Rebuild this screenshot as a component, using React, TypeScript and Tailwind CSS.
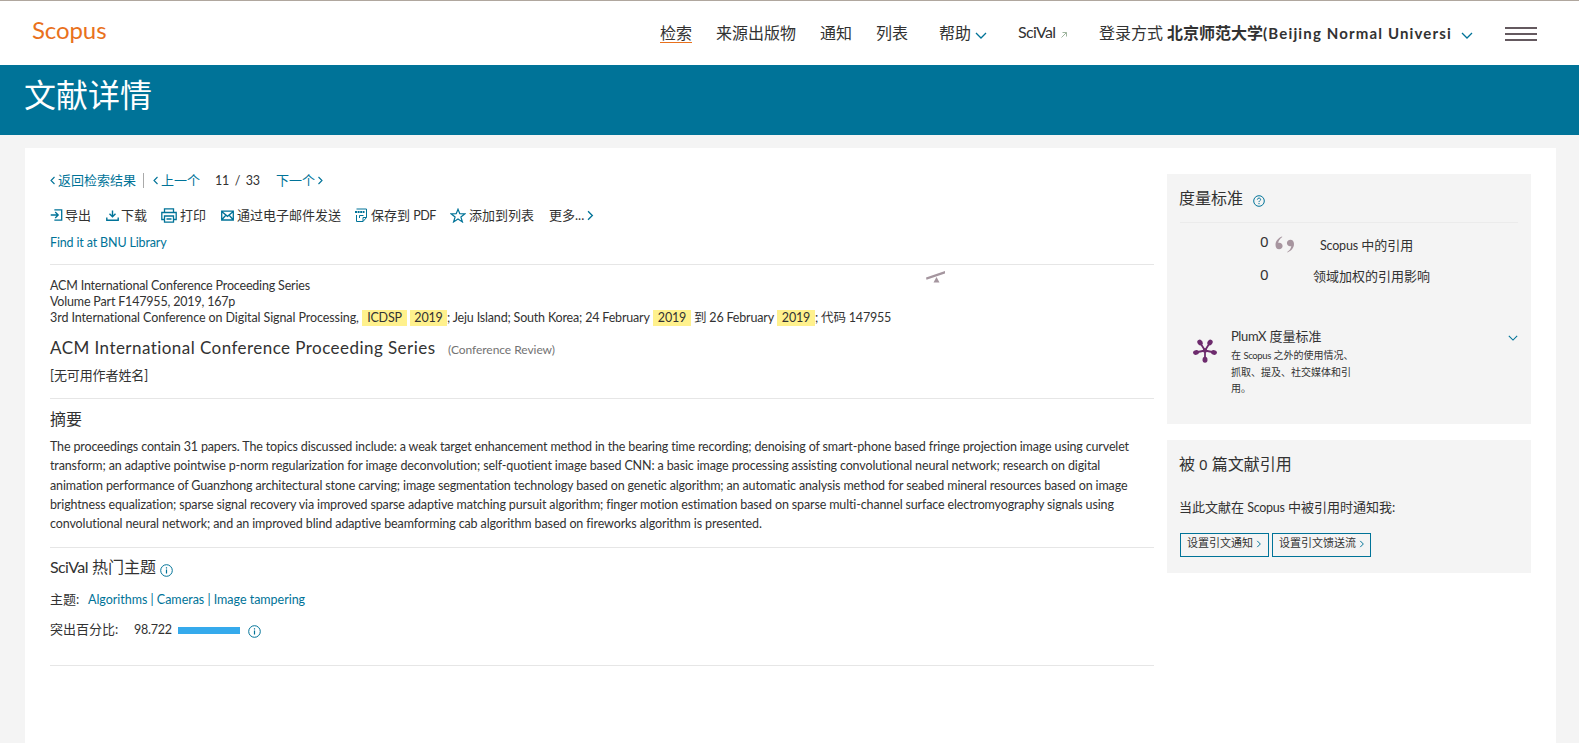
import type { ReactNode } from "react";

const navItems = ["来源出版物", "通知", "列表"];

const abstractLines = [
  { text: "The proceedings contain 31 papers. The topics discussed include: a weak target enhancement method in the bearing time recording; denoising of smart-phone based fringe projection image using curvelet", tracking: "tracking-[-0.15px]" },
  { text: "transform; an adaptive pointwise p-norm regularization for image deconvolution; self-quotient image based CNN: a basic image processing assisting convolutional neural network; research on digital", tracking: "tracking-[-0.127px]" },
  { text: "animation performance of Guanzhong architectural stone carving; image segmentation technology based on genetic algorithm; an automatic analysis method for seabed mineral resources based on image", tracking: "tracking-[-0.138px]" },
  { text: "brightness equalization; sparse signal recovery via improved sparse adaptive matching pursuit algorithm; finger motion estimation based on sparse multi-channel surface electromyography signals using", tracking: "tracking-[-0.135px]" },
  { text: "convolutional neural network; and an improved blind adaptive beamforming cab algorithm based on fireworks algorithm is presented.", tracking: "tracking-[-0.11px]" },
];

function Chevron({ className, d = "M1 1l5 5 5-5", box = "0 0 12 7", width = 1.3 }: { className: string; d?: string; box?: string; width?: number }) {
  return (
    <svg className={className} viewBox={box} fill="none" stroke="#007398" strokeWidth={width}>
      <path d={d} />
    </svg>
  );
}

function ChevronLeft({ className }: { className: string }) {
  return <Chevron className={className} d="M4.500 1L1 4.500L4.500 8" box="0 0 5 9" width={1.1} />;
}

function ChevronRight({ className }: { className: string }) {
  return <Chevron className={className} d="M.5 1L4 4.500L.5 8" box="0 0 5 9" width={1.1} />;
}

function InfoIcon({ className }: { className: string }) {
  return (
    <svg className={className} viewBox="0 0 13 13" fill="none" stroke="#007398">
      <circle cx="6.500" cy="6.500" r="5.800" />
      <path d="M6.500 5.500v4M6.500 3.200v1.300" strokeWidth="1.200" />
    </svg>
  );
}

function HelpIcon({ className }: { className: string }) {
  return (
    <svg className={className} viewBox="0 0 12 12" fill="none" stroke="#007398">
      <circle cx="6" cy="6" r="5.300" />
      <path d="M4.400 4.600c0-2 3.200-2 3.200-.1 0 1.200-1.600 1.200-1.600 2.600M6 8v1.200" />
    </svg>
  );
}

function ExportIcon() {
  return (
    <svg className="h-3 w-3.5 shrink-0" viewBox="0 0 14 12" fill="none" stroke="#007398" strokeWidth="1.300">
      <path d="M5 1.500V.8h6.700v10.400H5v-.8M.7 6h7.500M5.200 3L8.200 6l-3 3" />
    </svg>
  );
}

function DownloadIcon() {
  return (
    <svg className="h-3 w-[13px] shrink-0" viewBox="0 0 13 12" fill="none" stroke="#007398" strokeWidth="1.400">
      <path d="M6.500 1.500v6M3.500 4.800l3 3 3-3M.8 8.500v2.700h11.400V8.500" />
    </svg>
  );
}

function PrintIcon() {
  return (
    <svg className="h-[15px] w-4 shrink-0" viewBox="0 0 16 15" fill="none" stroke="#007398" strokeWidth="1.300">
      <path d="M3.500 4.500V.8h9v3.700M3.500 11.500H.8v-7h14.400v7h-2.700M3.500 8h9v6.200h-9zM5.500 11h5" />
    </svg>
  );
}

function MailIcon() {
  return (
    <svg className="h-[11px] w-[13px] shrink-0" viewBox="0 0 13 11" fill="none" stroke="#007398" strokeWidth="1.300">
      <path d="M.7 1.200h11.600v8.800H.7zM.7 1.500l5.800 4.800 5.800-4.800M.8 9.800L5 5M12.200 9.800L8 5" />
    </svg>
  );
}

function PdfIcon() {
  return (
    <svg className="h-3.5 w-3 shrink-0" viewBox="0 0 12 14" fill="none" stroke="#007398">
      <path d="M1.500 1h10v8.500L8 13.500H1.500V7M11.500 9.500H8v4" />
      <path d="M0 4h9.500" strokeWidth="2" strokeDasharray="2 .6" />
      <path d="M4.500 10V7.500h4" />
    </svg>
  );
}

function StarIcon() {
  return (
    <svg className="h-[15px] w-4 shrink-0" viewBox="0 0 16 15" fill="none" stroke="#007398" strokeWidth="1.200">
      <path d="M8 1.200l1.800 4.500 5.200.1-4.100 3.100 1.500 5L8 11l-4.400 2.900 1.500-5L1 5.800l5.200-.1z" />
    </svg>
  );
}

function QuoteIcon() {
  return (
    <svg className="h-[17px] w-5" viewBox="0 0 20 17" fill="#a7959f">
      <path d="M7 .6C3.500 2 .5 5 .5 9c0 2.800 1.500 4.300 3.600 4.300 2 0 3.500-1.400 3.500-3.300S6.200 6.800 4.400 6.800c-.6 0-1 .1-1.200.2C3.500 4.500 5 2.500 7.300 1z" />
      <path d="M12.500 16.400c3.500-1.400 6.500-4.400 6.500-8.400 0-2.800-1.500-4.300-3.600-4.300-2 0-3.500 1.400-3.500 3.300s1.400 3.200 3.200 3.200c.6 0 1-.1 1.200-.2-.3 2.500-1.800 4.500-4.100 6z" />
    </svg>
  );
}

function PlumIcon() {
  return (
    <svg className="h-6 w-6 shrink-0" viewBox="0 0 24 24" fill="#6d2b6d" stroke="#6d2b6d" strokeWidth="1.800">
      <path d="M12 11.500L7 3.500M12 11.500l5-8M12 11.500l-9.500 2M12 11.500l9.500 2M12 11.500V21" />
      <g stroke="none">
        <ellipse cx="7" cy="3.500" rx="2.500" ry="3" transform="rotate(-32 7 3.500)" />
        <ellipse cx="17" cy="3.500" rx="2.500" ry="3" transform="rotate(32 17 3.500)" />
        <ellipse cx="3" cy="13.500" rx="3" ry="2.300" transform="rotate(-12 3 13.500)" />
        <ellipse cx="21" cy="13.500" rx="3" ry="2.300" transform="rotate(12 21 13.500)" />
        <ellipse cx="12" cy="20.800" rx="2.500" ry="3" />
        <circle cx="12" cy="11.500" r="2.200" />
      </g>
    </svg>
  );
}

function Mark({ children, className }: { children: ReactNode; className: string }) {
  return <mark className={`flex h-4 justify-center bg-[#fff18d] text-[#323232] ${className}`}>{children}</mark>;
}

function Header() {
  return (
    <header className="flex h-[65px] items-start border-t border-[#b0a79e] bg-white pl-8 text-base leading-6">
      <div className="w-[628px] pt-[13px] text-2xl leading-8 tracking-[-0.1px] text-[#e9711c]">Scopus</div>
      <nav className="flex pt-5">
        <a className="h-[22px] border-b border-[#e9711c]">检索</a>
        <div className="flex gap-6 pl-6">
          {navItems.map((item) => (
            <a key={item}>{item}</a>
          ))}
        </div>
        <a className="ml-[31px] flex w-[79px]">
          帮助
          <Chevron className="mt-[11px] ml-1 h-[7px] w-3" />
        </a>
        <a className="flex w-[81px]">
          <span className="-mt-px w-[43px] tracking-[-0.7px]">SciVal</span>
          <svg className="mt-[11px] h-1.5 w-1.5" viewBox="0 0 6 6" fill="none" stroke="#9fb59f">
            <path d="M.5 5.500l5-5M1.500.5h4v4" />
          </svg>
        </a>
        <a className="flex whitespace-nowrap">
          <span className="w-[68px]">登录方式</span>
          <span className="w-[294px] font-bold">
            北京师范大学<span className="text-[15px] tracking-[1.15px]">(Beijing Normal Universi</span>
          </span>
          <Chevron className="mt-[11px] h-[7px] w-3" />
        </a>
      </nav>
      <button className="mt-[26px] ml-8 flex w-8 flex-col gap-1">
        <span className="h-0.5 w-8 bg-[#64595f]" />
        <span className="h-0.5 w-8 bg-[#64595f]" />
        <span className="h-0.5 w-8 bg-[#64595f]" />
      </button>
    </header>
  );
}

function Toolbar() {
  return (
    <div className="mt-[15px] flex h-5 items-center whitespace-nowrap leading-5">
      <a className="flex w-14 items-center"><ExportIcon /><span className="ml-px">导出</span></a>
      <a className="flex w-[55px] items-center gap-0.5"><DownloadIcon />下载</a>
      <a className="flex w-[60px] items-center gap-[3px]"><PrintIcon />打印</a>
      <a className="flex w-[134px] items-center gap-[3px]"><MailIcon />通过电子邮件发送</a>
      <a className="flex w-[95px] items-center gap-1"><PdfIcon /><span>保存到 <span className="text-[12.5px] tracking-[-0.5px]">PDF</span></span></a>
      <a className="flex w-[99px] items-center gap-[3px]"><StarIcon />添加到列表</a>
      <a className="flex items-center"><span className="w-[38px]">更多...</span><ChevronRight className="h-[11px] w-[7px]" /></a>
    </div>
  );
}

function Metrics() {
  return (
    <section className="h-[250px] bg-[#f4f4f4] pt-3 pr-[13px] pl-[13px]">
      <div className="flex h-[37px] items-start border-b border-[#ebebeb] text-base leading-6">
        <h2 className="-ml-px">度量标准</h2>
        <HelpIcon className="mt-[9px] ml-[10px] h-3 w-3" />
      </div>
      <div className="flex h-[36px] pt-1">
        <span className="ml-[80px] w-[9px] pt-1 font-['Noto_Sans'] text-[15px] leading-5 tracking-[-0.5px]">0</span>
        <div className="mt-[9px] ml-1.5"><QuoteIcon /></div>
        <span className="ml-[25px] pt-2 leading-5">
          <span className="text-[12.5px] tracking-[-0.2px]">Scopus</span> 中的引用
        </span>
      </div>
      <div className="flex">
        <span className="ml-[80px] w-[9px] pt-[5px] font-['Noto_Sans'] text-[15px] leading-5 tracking-[-0.5px]">0</span>
        <span className="ml-[44px] pt-[7px] leading-5">领域加权的引用影响</span>
      </div>
      <div className="mt-10 flex">
        <div className="mt-[13px] ml-[13px]"><PlumIcon /></div>
        <div className="ml-[14px] w-[122px]">
          <h3 className="leading-5"><span className="tracking-[-0.4px]">PlumX</span> 度量标准</h3>
          <p className="mt-px whitespace-nowrap text-[10px] leading-4">
            在 <span className="text-[9.5px] tracking-[-0.4px]">Scopus</span> 之外的使用情况、
            <br />
            抓取、提及、社交媒体和引
            <br />
            用。
          </p>
        </div>
        <Chevron className="mt-[9px] ml-auto h-1.5 w-[10px]" />
      </div>
    </section>
  );
}

function CitedBy() {
  return (
    <section className="mt-4 h-[133px] bg-[#f4f4f4] pt-3 pl-3">
      <h2 className="h-6 text-base leading-6">被 <span className="font-['Noto_Sans'] text-[15px]">0</span> 篇文献引用</h2>
      <p className="mt-[21px] h-5 leading-5">
        当此文献在 <span className="text-[12.5px] tracking-[-0.3px]">Scopus</span> 中被引用时通知我:
      </p>
      <div className="mt-4 ml-px flex gap-[3px] text-[11px] leading-[18px]">
        <button className="flex h-6 w-[89px] border border-[#007398] pl-1.5">
          设置引文通知
          <ChevronRight className="mt-[6px] ml-[3px] h-2 w-1.5" />
        </button>
        <button className="flex h-6 w-[99px] border border-[#007398] pl-1.5">
          设置引文馈送流
          <ChevronRight className="mt-[6px] ml-[3px] h-2 w-1.5" />
        </button>
      </div>
    </section>
  );
}

export default function App() {
  return (
    <div className="h-[743px] overflow-hidden bg-[#f4f4f4] font-['Lato','Noto_Sans_CJK_SC',sans-serif] text-[13px] text-[#323232]">
      <Header />
      <div className="h-[70px] bg-[#007398] pt-1.5 pl-6 text-[32px] leading-[48px] text-white">文献详情</div>

      <main className="mt-[13px] ml-[25px] flex h-[595px] w-[1531px] bg-white pl-[25px]">
        <div className="w-[1104px] pt-[22px]">
          <div className="flex h-5 items-center whitespace-nowrap leading-5 text-[#007398]">
            <ChevronLeft className="mr-[3px] h-[9px] w-[5px]" />
            <a>返回检索结果</a>
            <span className="mr-[9px] ml-[7px] h-[15px] w-px bg-[#aaa]" />
            <ChevronLeft className="mr-[3px] h-[9px] w-[5px]" />
            <a className="w-[54px]">上一个</a>
            <span className="w-[61px] pt-px whitespace-pre text-[12.5px] tracking-[-0.3px] text-[#323232]">11  /  33</span>
            <a>下一个</a>
            <ChevronRight className="ml-[3px] h-[9px] w-[5px]" />
          </div>
          <Toolbar />
          <a className="mt-2 block text-[12.5px] leading-5 tracking-[-0.15px] text-[#007398]">Find it at BNU Library</a>

          <div className="relative mt-[11px] h-[134px] border-t border-[#e6e6e6] pt-[13px] whitespace-nowrap">
            <svg className="absolute top-[6px] left-[876px] h-[13px] w-5" viewBox="0 0 20 13" fill="#a5969f">
              <path d="M0 6.500L19 0v2.500L.5 8.700zM10.500 6l3 5.500h-6z" />
            </svg>
            <div className="text-[12.5px] leading-4 tracking-[-0.18px]">
              <p>ACM International Conference Proceeding Series</p>
              <p>Volume Part F147955, 2019, 167p</p>
              <div className="flex">
                <span className="w-[312px] tracking-[-0.09px]">3rd International Conference on Digital Signal Processing,</span>
                <Mark className="w-[45px]">ICDSP</Mark>
                <Mark className="ml-[3px] w-[37px]">2019</Mark>
                <span className="w-[206px]">; Jeju Island; South Korea; 24 February</span>
                <Mark className="w-[38px]">2019</Mark>
                <span className="w-[86px] pl-[3px]">到 26 February</span>
                <Mark className="w-[38px]">2019</Mark>
                <span>; 代码 147955</span>
              </div>
            </div>
            <div className="mt-2 flex h-7 leading-7">
              <h1 className="w-[398px] text-[17px] leading-7 tracking-[0.45px]">ACM International Conference Proceeding Series</h1>
              <span className="pt-0.5 text-xs leading-7 tracking-[-0.05px] text-[#737373]">(Conference Review)</span>
            </div>
            <p className="mt-[3px] h-5 leading-5 tracking-[-0.1px]">[无可用作者姓名]</p>
          </div>

          <div className="h-[149px] border-t border-[#e6e6e6] pt-2 whitespace-nowrap">
            <h2 className="text-base leading-6">摘要</h2>
            <div className="mt-1.5 text-[12.5px] leading-[19.3px]">
              {abstractLines.map((line) => (
                <p key={line.text} className={line.tracking}>{line.text}</p>
              ))}
            </div>
          </div>

          <div className="h-[119px] border-y border-[#e6e6e6] pt-[7px] whitespace-nowrap">
            <h2 className="flex text-base leading-6">
              <span className="mr-1 tracking-[-0.6px]">SciVal</span>热门主题
              <InfoIcon className="mt-[9px] ml-1 h-[13px] w-[13px]" />
            </h2>
            <div className="mt-[10px] flex h-5 leading-5">
              <span className="w-[38px]">主题:</span>
              <span className="pt-px text-[12.5px] tracking-[-0.02px] text-[#007398]">Algorithms | Cameras | Image tampering</span>
            </div>
            <div className="mt-[10px] flex leading-5">
              <span className="w-[84px]">突出百分比:</span>
              <span className="w-[44px] pt-px text-[12.5px] leading-5 tracking-[-0.25px]">98.722</span>
              <span className="mt-[8px] h-[7px] w-[62px] bg-[#35aaec]" />
              <InfoIcon className="mt-[6px] ml-2 h-[13px] w-[13px]" />
            </div>
          </div>
        </div>

        <aside className="ml-[13px] w-[364px] pt-[26px]">
          <Metrics />
          <CitedBy />
        </aside>
      </main>
    </div>
  );
}
